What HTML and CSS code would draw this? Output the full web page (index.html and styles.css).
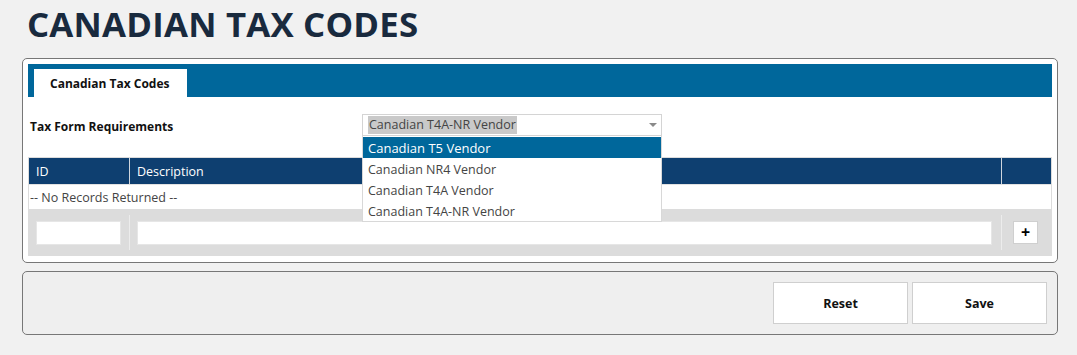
FILE: index.html
```html
<!DOCTYPE html>
<html>
<head>
<meta charset="utf-8">
<link rel="stylesheet" href="styles.css">
</head>
<body>
<h1 class="title">CANADIAN TAX CODES</h1>
<div class="panel">
  <div class="tabbar"><div class="tab">Canadian Tax Codes</div></div>
  <div class="form-row">
    <div class="label">Tax Form Requirements</div>
    <div class="select-wrap">
      <div class="select"><span class="sel-text">Canadian T4A-NR Vendor</span><span class="arrow"></span></div>
      <ul class="dropdown">
        <li class="active">Canadian T5 Vendor</li>
        <li>Canadian NR4 Vendor</li>
        <li>Canadian T4A Vendor</li>
        <li>Canadian T4A-NR Vendor</li>
      </ul>
    </div>
  </div>
  <div class="grid">
    <div class="row head">
      <div class="c-id">ID</div>
      <div class="c-desc">Description</div>
      <div class="c-act"></div>
    </div>
    <div class="row empty">-- No Records Returned --</div>
    <div class="row foot">
      <div class="c-id"><div class="input id-input"></div></div>
      <div class="c-desc"><div class="input"></div></div>
      <div class="c-act"><div class="plus">+</div></div>
    </div>
  </div>
</div>
<div class="actions">
  <button class="btn">Reset</button>
  <button class="btn">Save</button>
</div>
</body>
</html>
```
FILE: styles.css
```css
* { box-sizing: border-box; }
body {
  margin: 0;
  background: #f1f1f1;
  font-family: "Open Sans", "Noto Sans", sans-serif;
  font-size: 12.5px;
  color: #333;
}
.title {
  margin: 0;
  padding: 2px 0 0 27px;
  height: 58px;
  font-size: 34.8px;
  font-weight: 700;
  color: #192a3e;
  letter-spacing: 0.2px;
  line-height: 44px;
}
.panel {
  margin: 0 19px 0 22px;
  background: #fff;
  border: 1px solid #777;
  border-radius: 5px;
  padding: 5px 5px 6px 5px;
}
.tabbar {
  background: #00679b;
  height: 33px;
  padding: 5px 0 0 6px;
}
.tab {
  width: 153px;
  height: 28px;
  background: #fff;
  font-weight: 700;
  color: #111;
  font-size: 12px;
  padding-left: 16px;
  line-height: 30px;
}
.form-row {
  display: flex;
  align-items: center;
  height: 60px;
  padding: 17px 0 21px 2px;
}
.label {
  width: 332px;
  font-weight: 700;
  color: #111;
  font-size: 12px;
  padding-top: 3px;
}
.select-wrap { position: relative; }
.select {
  width: 300px;
  height: 22px;
  border: 1px solid #d4d4d4;
  background: #fff;
  display: flex;
  align-items: center;
  padding-left: 5px;
  position: relative;
}
.sel-text {
  background: #c9c9c9;
  color: #444;
  line-height: 18px;
  padding: 0 1px;
}
.arrow {
  position: absolute;
  right: 4px;
  top: 8px;
  border-left: 4px solid transparent;
  border-right: 4px solid transparent;
  border-top: 4px solid #8a8a8a;
}
.dropdown {
  position: absolute;
  left: 0;
  top: 22px;
  width: 300px;
  margin: 0;
  padding: 1px 0 0 0;
  list-style: none;
  background: #fff;
  border: 1px solid #d8d8d8;
  border-top: none;
  z-index: 5;
}
.dropdown li {
  height: 21px;
  line-height: 23px;
  padding-left: 5px;
  color: #444;
}
.dropdown li.active {
  background: #00679b;
  color: #fff;
  font-size: 13px;
  line-height: 22px;
}
.grid {
  border: 1px solid #dcdcdc;
  border-top: none;
}
.row { display: flex; }
.c-id { width: 101px; flex: none; }
.c-desc { flex: 1; }
.c-act { width: 49px; flex: none; }
.head {
  background: #0e3f70;
  color: #fff;
  height: 27px;
  line-height: 28px;
  border-top: 1px solid #dcdcdc;
}
.head .c-id { padding-left: 7px; border-right: 1px solid #cfd6de; }
.head .c-desc { padding-left: 7px; border-right: 1px solid #cfd6de; }
.empty {
  height: 25px;
  line-height: 26px;
  background: #fff;
  color: #444;
  padding-left: 1px;
  border-top: 1px solid #e2e2e2;
}
.foot {
  background: #dcdcdc;
  height: 46px;
  padding: 6px 0 5px 0;
}
.foot .c-id { padding: 6px 8px 0 7px; border-right: 1px solid #ececec; }
.foot .c-desc { padding: 6px 9px 0 7px; border-right: 1px solid #ececec; }
.foot .c-act { padding: 6px 0 0 11px; }
.input {
  height: 24px;
  background: #fff;
  border: 1px solid #e6e6e6;
}
.plus {
  width: 25px;
  height: 23px;
  background: #fff;
  border: 1px solid #cfcfcf;
  color: #000;
  font-weight: 700;
  font-size: 16px;
  line-height: 20px;
  text-align: center;
}
.actions {
  margin: 8px 19px 0 22px;
  height: 64px;
  background: #efefef;
  border: 1px solid #777;
  border-radius: 5px;
  display: flex;
  justify-content: flex-end;
  align-items: flex-start;
  gap: 4px;
  padding: 10px 10px 0 0;
}
.btn {
  width: 135px;
  height: 42px;
  background: #fff;
  border: 1px solid #cfcfcf;
  font-family: "Open Sans", "Noto Sans", sans-serif;
  font-size: 12.5px;
  font-weight: 700;
  color: #111;
  padding: 0;
}
```
